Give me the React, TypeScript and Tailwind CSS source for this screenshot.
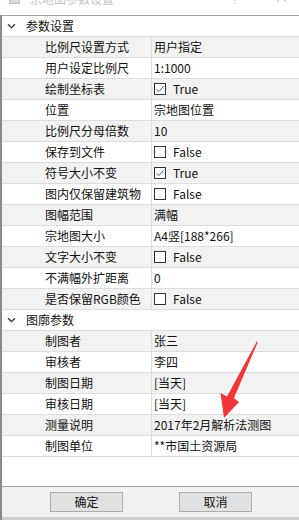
import React from 'react';

type Row = { label: string; value?: string; check?: boolean };

const GROUPS: { title: string; rows: Row[] }[] = [
  {
    title: '参数设置',
    rows: [
      { label: '比例尺设置方式', value: '用户指定' },
      { label: '用户设定比例尺', value: '1:1000' },
      { label: '绘制坐标表', check: true },
      { label: '位置', value: '宗地图位置' },
      { label: '比例尺分母倍数', value: '10' },
      { label: '保存到文件', check: false },
      { label: '符号大小不变', check: true },
      { label: '图内仅保留建筑物', check: false },
      { label: '图幅范围', value: '满幅' },
      { label: '宗地图大小', value: 'A4竖[188*266]' },
      { label: '文字大小不变', check: false },
      { label: '不满幅外扩距离', value: '0' },
      { label: '是否保留RGB颜色', check: false },
    ],
  },
  {
    title: '图廓参数',
    rows: [
      { label: '制图者', value: '张三' },
      { label: '审核者', value: '李四' },
      { label: '制图日期', value: '[当天]' },
      { label: '审核日期', value: '[当天]' },
      { label: '测量说明', value: '2017年2月解析法测图' },
      { label: '制图单位', value: '**市国土资源局' },
    ],
  },
];

function Chevron() {
  return (
    <svg width="9" height="6" viewBox="0 0 9 6" className="shrink-0">
      <path d="M1 1.2 L4.5 4.6 L8 1.2" fill="none" stroke="#333" strokeWidth="1.3" />
    </svg>
  );
}

function CheckBox({ on }: { on: boolean }) {
  return (
    <div className="flex items-center">
      <div className="w-[12px] h-[12px] border border-[#333] bg-white flex items-center justify-center">
        {on && (
          <svg width="10" height="10" viewBox="0 0 10 10">
            <path d="M1.5 5.2 L4 7.6 L8.6 2.2" fill="none" stroke="#555" strokeWidth="1" />
          </svg>
        )}
      </div>
      <span className="ml-[7px]">{on ? 'True' : 'False'}</span>
    </div>
  );
}

export default function App() {
  return (
    <div className="relative w-[299px] h-[520px] overflow-hidden bg-white flex flex-col text-[12px] text-[#111] font-['Noto_Sans_CJK_SC','Microsoft_YaHei',sans-serif]">
      {/* title bar, cut off at the top */}
      <div className="h-[15px] shrink-0 overflow-hidden">
        <div className="-mt-[9px] h-[16px] flex items-center pl-[9px] pr-[12px]">
          <div className="w-[11px] h-[10px] bg-[#d6dcd6] border border-[#b8c0b8]" />
          <span className="ml-[10px] text-[12px] text-[#c4c4c4]">宗地图参数设置</span>
          <span className="ml-auto mr-[40px] text-[#c4c4c4]">⁝</span>
          <svg width="11" height="7" viewBox="0 0 11 7">
            <path d="M1 6 L5.5 1.5 L10 6" fill="none" stroke="#bbb" strokeWidth="1" />
          </svg>
        </div>
      </div>

      <div className="flex-1 flex flex-col border-l-2 border-[#8a8a8a]">
        {/* property grid */}
        <div className="flex-1 flex flex-col border-t border-b border-[#a3a3a3] bg-white">
          {GROUPS.map(g => (
            <div key={g.title}>
              <div className="h-[21px] flex items-center border-b border-[#dcdcdc] pl-[5px]">
                <Chevron />
                <span className="ml-[10px]">{g.title}</span>
              </div>
              {g.rows.map((r, i) => (
                <div
                  key={r.label}
                  className={`h-[21px] flex border-b border-[#dcdcdc] ${i % 2 === 0 ? 'bg-[#f2f2f2]' : 'bg-white'}`}
                >
                  <div className="w-[150px] shrink-0 pl-[43px] flex items-center border-r border-[#dcdcdc] whitespace-nowrap">
                    {r.label}
                  </div>
                  <div className="flex-1 pl-[2px] flex items-center whitespace-nowrap">
                    {r.check !== undefined ? <CheckBox on={r.check} /> : r.value}
                  </div>
                </div>
              ))}
            </div>
          ))}
        </div>

        {/* buttons */}
        <div className="h-[30px] shrink-0 bg-[#f0f0f0] flex items-center pl-[48px] gap-[56px]">
          <button className="w-[73px] h-[20px] bg-[#e1e1e1] border border-[#adadad] text-[12px] font-normal text-[#111] leading-none">
            确定
          </button>
          <button className="w-[73px] h-[20px] bg-[#e1e1e1] border border-[#adadad] text-[12px] font-normal text-[#111] leading-none">
            取消
          </button>
        </div>
        <div className="h-[3px] shrink-0 bg-[#cfcfcf]" />
      </div>

      {/* red annotation arrow */}
      <svg className="absolute left-0 top-0 pointer-events-none" width="299" height="520" viewBox="0 0 299 520">
        <polygon
          points="257.8,342 234,398 239,402 224,418 220.5,393 227,396.5 256.8,341.5"
          fill="#f23535"
        />
      </svg>
    </div>
  );
}
